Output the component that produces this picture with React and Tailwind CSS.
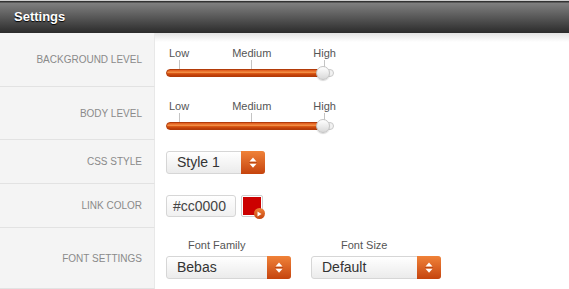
import React from 'react'

function Arrows() {
  return (
    <svg width="8" height="13" viewBox="0 0 8 13">
      <polygon points="0.5,5.5 4,1.5 7.5,5.5" fill="#fff" />
      <rect x="0" y="6.2" width="8" height="0.8" fill="#b5430f" />
      <polygon points="0.5,7.8 7.5,7.8 4,11.8" fill="#fff" />
    </svg>
  )
}

function Select({ value, width }) {
  return (
    <div
      className={`flex items-stretch h-[23px] rounded-[3px] border border-[#d6d6d6] bg-gradient-to-b from-white to-[#ebebeb] ${width}`}
    >
      <span className="flex-1 flex items-center pl-[10px] text-[14px] text-[#333]">{value}</span>
      <span className="w-[24px] -my-px -mr-px flex items-center justify-center rounded-r-[3px] bg-gradient-to-b from-[#f08238] to-[#c5430c]">
        <Arrows />
      </span>
    </div>
  )
}

function Slider() {
  const ticks = [
    ['Low', 'ml-[3px]'],
    ['Medium', 'ml-[43px]'],
    ['High', 'ml-[42px]'],
  ]
  return (
    <div className="w-[170px]">
      <div className="flex">
        {ticks.map(([t, m]) => (
          <div key={t} className={`flex flex-col items-center ${m}`}>
            <span className="text-[11px] leading-[13px] text-[#555]">{t}</span>
            <span className="w-px h-[9px] bg-[#c4c4c4]" />
          </div>
        ))}
      </div>
      <div className="relative w-[160px] h-[8px] rounded-full border border-[#b23b09] bg-[linear-gradient(to_bottom,#e0581a,#f39146_45%,#d5500f_60%,#b53a06)]">
        <span className="absolute left-[159px] top-[-1px] w-[8px] h-[8px] rounded-full border border-[#c9c9c9] bg-[#f2f2f2]" />
        <span className="absolute left-[149px] top-[-4px] w-[14px] h-[14px] rounded-full border border-[#c4c4c4] bg-gradient-to-b from-white to-[#d9d9d9] shadow-[0_1px_1px_rgba(0,0,0,0.15)]" />
      </div>
    </div>
  )
}

function Row({ label, h, first, children }) {
  return (
    <div className={`flex ${h}`}>
      <div className="w-[155px] shrink-0 flex items-center justify-end pr-[12px] bg-[#f4f4f4] border-r border-[#e8e8e8] border-b border-b-[#e2e2e2]">
        <span className="text-[10px] uppercase text-[#8a8a8a]">{label}</span>
      </div>
      <div
        className={`flex-1 pl-[11px] ${first ? 'bg-[linear-gradient(to_bottom,#e2e2e2,#ffffff_9px)]' : 'bg-white'}`}
      >
        {children}
      </div>
    </div>
  )
}

export default function App() {
  return (
    <div className="w-[569px] h-[289px] overflow-hidden bg-white font-['Liberation_Sans',Arial,sans-serif]">
      <div className="h-[33px] flex items-center pl-[14px] bg-[linear-gradient(to_bottom,#cfcfcf_0,#cfcfcf_1px,#333_1px,#333_2px,#808080_3px,#2b2b2b_100%)]">
        <span className="text-[13px] font-bold text-white [text-shadow:0_1px_1px_#000]">Settings</span>
      </div>

      <Row label="Background Level" h="h-[54px]" first>
        <div className="pt-[14px]">
          <Slider />
        </div>
      </Row>

      <Row label="Body Level" h="h-[53px]">
        <div className="pt-[13px]">
          <Slider />
        </div>
      </Row>

      <Row label="CSS Style" h="h-[44px]">
        <div className="h-full flex items-center">
          <Select value="Style 1" width="w-[99px]" />
        </div>
      </Row>

      <Row label="Link Color" h="h-[44px]">
        <div className="h-full flex items-center gap-[5px]">
          <div className="w-[70px] h-[22px] flex items-center pl-[6px] rounded-[3px] border border-[#d6d6d6] bg-gradient-to-b from-white to-[#f0f0f0] text-[14px] text-[#444]">
            #cc0000
          </div>
          <div className="relative w-[22px] h-[22px] rounded-[2px] border border-[#cfcfcf] bg-white p-[1px]">
            <div className="w-full h-full bg-[#cc0000]" />
            <span className="absolute right-[-3px] bottom-[-3px] w-[11px] h-[11px] rounded-full bg-gradient-to-b from-[#f08238] to-[#c5430c] flex items-center justify-center">
              <svg width="5" height="6" viewBox="0 0 5 6">
                <polygon points="0.5,0.5 4.5,3 0.5,5.5" fill="#fff" />
              </svg>
            </span>
          </div>
        </div>
      </Row>

      <Row label="Font Settings" h="h-[61px]">
        <div className="flex gap-[20px] pt-[11px]">
          <div className="flex flex-col gap-[4px]">
            <span className="pl-[22px] text-[11px] leading-[13px] text-[#555]">Font Family</span>
            <Select value="Bebas" width="w-[125px]" />
          </div>
          <div className="flex flex-col gap-[4px]">
            <span className="pl-[30px] text-[11px] leading-[13px] text-[#555]">Font Size</span>
            <Select value="Default" width="w-[130px]" />
          </div>
        </div>
      </Row>
    </div>
  )
}
